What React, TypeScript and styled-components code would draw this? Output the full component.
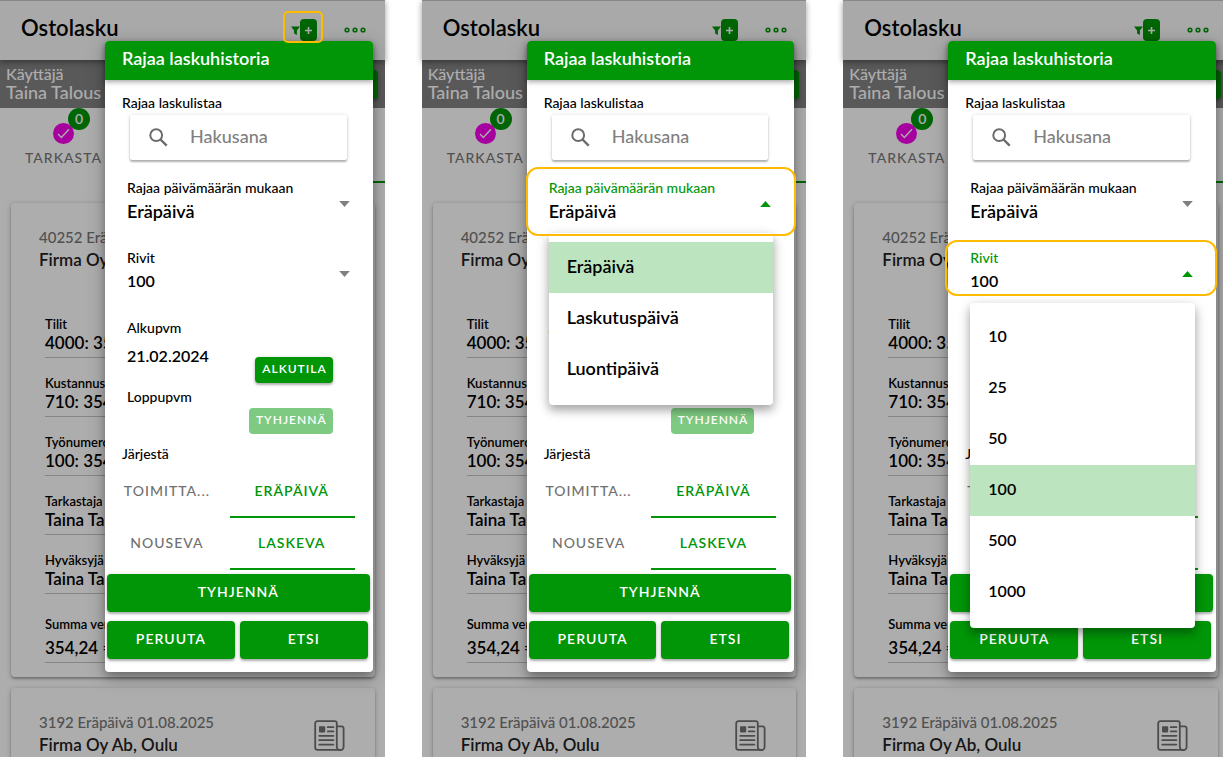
import React from "react";
import styled, { createGlobalStyle, css } from "styled-components";

const GlobalStyle = createGlobalStyle`
  *, *::before, *::after { box-sizing: border-box; }
  body {
    margin: 0;
    background: #fff;
    overflow-x: hidden;
    font-family: Lato, "Liberation Sans", sans-serif;
    font-weight: 600;
    color: #000;
  }
  button, input, select { font: inherit; color: inherit; margin: 0; padding: 0; border: 0; background: none; border-radius: 0; outline: none; }
  button { cursor: pointer; }
`;

const green = "#009608";
const amber = "#ffbb00";

const Board = styled.main`
  display: grid;
  grid-template-columns: repeat(3, minmax(0, 1fr));
  gap: 37px;
  min-height: 100vh;
  margin-right: -5px;
`;

const Phone = styled.section`
  position: relative;
  display: flex;
  flex-direction: column;
  background: #fff;
`;

const Scrim = styled.div`
  position: absolute;
  inset: 0;
  background: rgba(0, 0, 0, 0.32);
`;

/* ---------- page under the dialog ---------- */

const AppBar = styled.header`
  position: relative;
  display: flex;
  align-items: center;
  height: 60px;
  padding: 0 19px 4px 21px;
  border-top: 1px solid #c8c8c8;
  background: #fafafa;
  box-shadow: 0 2px 6px rgba(0, 0, 0, 0.4);
`;

const PageTitle = styled.h1`
  flex: 1;
  margin: 0;
  padding-bottom: 2px;
  font-size: 22px;
  font-weight: 600;
  line-height: 28px;
`;

const FilterButton = styled.button`
  display: flex;
  align-items: center;
  height: 22px;
  margin: 3px 27px 0 0;
`;

const PlusBox = styled.span`
  display: flex;
  align-items: center;
  justify-content: center;
  width: 17px;
  height: 22px;
  border-radius: 4px;
  background: ${green};
  color: #fff;
`;

const MoreButton = styled.button`
  display: flex;
  align-items: center;
  height: 22px;
  margin-top: 3px;
`;

const UserBar = styled.div`
  display: flex;
  align-items: center;
  justify-content: space-between;
  height: 48px;
  padding: 0 7px 2px 6px;
  background: #838383;
  color: #fff;
`;

const UserName = styled.p`
  margin: 0;
  font-size: 18px;
  font-weight: 500;
  line-height: 18px;
`;

const UserRole = styled(UserName)`
  font-size: 16px;
`;

const UserButton = styled.button`
  width: 60px;
  height: 29px;
  margin-top: 3px;
  border-radius: 4px;
  background: ${green};
  box-shadow: 0 2px 3px rgba(0, 0, 0, 0.3);
`;

const StageTabs = styled.nav`
  display: grid;
  grid-template-columns: 1fr 1fr;
  height: 75px;
`;

const StageTab = styled.button<{ $active?: boolean }>`
  display: flex;
  flex-direction: column;
  align-items: flex-start;
  padding: 15px 0 0 25px;
  border-bottom: 2px solid ${(p) => (p.$active ? green : "transparent")};
  color: #7a7a7a;
  font-size: 14px;
  font-weight: 500;
  line-height: 20px;
  letter-spacing: 1px;
`;

const StageMark = styled.span`
  position: relative;
  display: flex;
  align-items: center;
  justify-content: center;
  width: 21px;
  height: 21px;
  margin: 0 0 4px 28px;
  border-radius: 50%;
  background: #f500eb;
  color: #fff;
`;

const CountBadge = styled.span`
  position: absolute;
  left: 15px;
  top: -15px;
  width: 22px;
  height: 22px;
  border-radius: 50%;
  background: ${green};
  font-size: 14px;
  font-weight: 600;
  line-height: 21px;
  text-align: center;
  letter-spacing: 0;
`;

const Invoice = styled.article<{ $last?: boolean }>`
  position: relative;
  margin: ${(p) => (p.$last ? "11px 10px 0 11px" : "20px 10px 0 11px")};
  padding: 24px 30px 14px 28px;
  border-radius: ${(p) => (p.$last ? "4px 4px 0 0" : "4px")};
  box-shadow: 0 1px 5px rgba(0, 0, 0, 0.25), 0 2px 2px rgba(0, 0, 0, 0.2);
  flex: ${(p) => (p.$last ? "1 0 auto" : "none")};
`;

const InvoiceHead = styled.header`
  display: flex;
  justify-content: space-between;
  align-items: center;
`;

const InvoiceMeta = styled.p`
  margin: 0;
  color: #777;
  font-size: 15px;
  font-weight: 500;
  line-height: 20px;
`;

const InvoiceFirm = styled.h2`
  margin: 0;
  color: #222;
  font-size: 17px;
  font-weight: 600;
  line-height: 26px;
`;

const Details = styled.dl`
  margin: 43px 0 0 6px;
`;

const Detail = styled.div<{ $total?: boolean }>`
  margin-top: ${(p) => (p.$total ? 22 : 17)}px;
  padding-bottom: 4px;
  border-bottom: 1px solid #c4c4c4;
  line-height: 16px;

  dt { font-size: 13px; }
  dd { margin: ${(p) => (p.$total ? 6 : 1)}px 0 0; font-size: 17px; line-height: 20px; }
`;

/* ---------- filter dialog ---------- */

const Dialog = styled.form`
  position: absolute;
  top: 41px;
  left: 105px;
  right: 12px;
  padding-bottom: 13px;
  border-radius: 4px;
  background: #fff;
  box-shadow: 0 5px 8px rgba(0, 0, 0, 0.25), 0 4px 20px rgba(0, 0, 0, 0.22);
`;

const DialogTitle = styled.h2`
  margin: 0;
  padding: 0 17px 5px;
  border-radius: 4px 4px 0 0;
  background: ${green};
  box-shadow: 0 2px 5px rgba(0, 0, 0, 0.35);
  color: #fff;
  font-size: 18px;
  font-weight: 600;
  line-height: 34px;
`;

const Caption = styled.label`
  display: block;
  color: #000;
  font-size: 14px;
  font-weight: 500;
  line-height: 16px;
`;

const SearchCaption = styled(Caption)`
  margin: 15px 17px 4px;
`;

const SearchBox = styled.div`
  display: flex;
  align-items: center;
  gap: 22px;
  height: 45px;
  margin: 0 26px 0 25px;
  padding: 0 19px;
  border-radius: 2px;
  box-shadow: 0 0 4px rgba(0, 0, 0, 0.12), 0 2px 2px rgba(0, 0, 0, 0.28);

  input { min-width: 0; flex: 1; padding-bottom: 4px; font-size: 18px; font-weight: 500; }
  input::placeholder { color: #808080; opacity: 1; }
`;

const Field = styled.div<{ $first?: boolean }>`
  position: relative;
  display: flex;
  align-items: center;
  margin-top: ${(p) => (p.$first ? 20 : 26)}px;
  padding: 0 23px 0 22px;

  > svg { margin-top: 4px; }
`;

const FieldBody = styled.div<{ $open?: boolean; $numeric?: boolean }>`
  flex: 1;
  min-width: 0;

  ${Caption} { color: ${(p) => (p.$open ? green : "#000")}; }

  select {
    display: block;
    width: 100%;
    height: 24px;
    margin-top: 4px;
    padding-bottom: 2px;
    appearance: none;
    font-size: ${(p) => (p.$numeric ? 16 : 18)}px;
    line-height: 22px;
  }
`;

const DateField = styled.div<{ $short?: boolean }>`
  display: flex;
  justify-content: space-between;
  align-items: flex-end;
  min-height: ${(p) => (p.$short ? 45 : 63)}px;
  margin-top: ${(p) => (p.$short ? 6 : 26)}px;
  padding: 0 40px 0 22px;

  input { display: block; width: 100%; height: 24px; margin-top: ${(p) => (p.$short ? 4 : 8)}px; padding-bottom: 2px; font-size: 16px; }
`;

const DateValue = styled.div`
  flex: 1;
  min-width: 0;
  align-self: flex-start;
`;

const raised = css`
  border-radius: 4px;
  background: ${green};
  box-shadow: 0 1px 4px rgba(0, 0, 0, 0.2), 0 2px 2px rgba(0, 0, 0, 0.2);
  color: #fff;
  letter-spacing: 1px;
`;

const SmallButton = styled.button`
  ${raised}
  height: 26px;
  padding: 0 6px 2px 7px;
  font-size: 12px;
  font-weight: 600;
  line-height: 24px;

  &:disabled { opacity: 0.5; box-shadow: none; }
`;

const SortCaption = styled.p`
  margin: 12px 17px 4px;
  font-size: 14px;
  font-weight: 500;
  line-height: 16px;
`;

const SortTabs = styled.div`
  display: grid;
  grid-template-columns: 1fr 1fr;
  margin-right: 18px;
`;

const SortTab = styled.button<{ $active?: boolean }>`
  height: 52px;
  padding: 0 17px 2px 16px;
  border-bottom: 2px solid ${(p) => (p.$active ? green : "transparent")};
  color: ${(p) => (p.$active ? green : "#707070")};
  font-size: 14px;
  font-weight: ${(p) => (p.$active ? 600 : 500)};
  letter-spacing: 1px;
  overflow: hidden;
  white-space: nowrap;
`;

const Actions = styled.div`
  display: grid;
  grid-template-columns: 1fr 1fr;
  gap: 9px 5px;
  margin: 4px 5px 0 2px;
`;

const ActionButton = styled.button<{ $wide?: boolean }>`
  ${raised}
  height: 38px;
  padding-bottom: 4px;
  font-size: 14px;
  font-weight: 600;
  grid-column: ${(p) => (p.$wide ? "1 / -1" : "auto")};
  margin-right: ${(p) => (p.$wide ? -2 : 0)}px;
`;

const Menu = styled.ul`
  position: absolute;
  z-index: 1;
  top: 53px;
  left: 22px;
  right: 21px;
  margin: 0;
  padding: 9px 0 10px;
  list-style: none;
  border-radius: 4px;
  background: #fff;
  box-shadow: 0 5px 8px rgba(0, 0, 0, 0.22), 0 4px 14px rgba(0, 0, 0, 0.2);
`;

const Option = styled.li<{ $selected?: boolean; $numeric?: boolean }>`
  padding: 0 18px 3px;
  background: ${(p) => (p.$selected ? "#bce5bf" : "transparent")};
  font-size: ${(p) => (p.$numeric ? 16 : 18)}px;
  line-height: 48px;
`;

const Highlight = styled.span<{ $inset: string }>`
  position: absolute;
  z-index: 2;
  inset: ${(p) => p.$inset};
  border: 2px solid ${amber};
  border-radius: 12px;
  pointer-events: none;
`;

const FilterMark = styled.span`
  position: absolute;
  top: 11px;
  right: 62px;
  width: 40px;
  height: 32px;
  border: 2px solid ${amber};
  border-radius: 5px;
  pointer-events: none;
`;

/* ---------- icons ---------- */

const FunnelIcon = () => (
  <svg width="9" height="9" viewBox="0 0 9 9" aria-hidden="true">
    <path d="M0 0.5h9L5.9 4.6V9L3.1 7.4V4.6z" fill={green} />
  </svg>
);

const PlusIcon = () => (
  <svg width="7" height="7" viewBox="0 0 7 7" aria-hidden="true">
    <path d="M3.5 0v7M0 3.5h7" stroke="currentColor" strokeWidth="1.6" />
  </svg>
);

const DotsIcon = () => (
  <svg width="22" height="6" viewBox="0 0 22 6" fill="none" stroke={green} strokeWidth="1.6" aria-hidden="true">
    <circle cx="3" cy="3" r="1.8" />
    <circle cx="11" cy="3" r="1.8" />
    <circle cx="19" cy="3" r="1.8" />
  </svg>
);

const CheckIcon = () => (
  <svg width="13" height="11" viewBox="0 0 13 11" fill="none" aria-hidden="true">
    <path d="M1 6l3.4 3.4L12 1.2" stroke="currentColor" strokeWidth="1.4" />
  </svg>
);

const SearchIcon = () => (
  <svg width="19" height="19" viewBox="0 0 19 19" fill="none" stroke="#6b6b6b" strokeWidth="2" aria-hidden="true">
    <circle cx="7.2" cy="7.2" r="5.9" />
    <path d="M11.5 11.5L17.7 17.7" strokeWidth="2.4" />
  </svg>
);

const Caret = ({ open }: { open?: boolean }) => (
  <svg width="11" height="6" viewBox="0 0 11 6" aria-hidden="true">
    <path d={open ? "M0.2 6L5.5 0L10.8 6z" : "M0.2 0h10.6L5.5 6z"} fill={open ? green : "#808080"} />
  </svg>
);

const NewsIcon = () => (
  <svg width="31" height="31" viewBox="0 0 31 31" fill="none" stroke="#707070" strokeWidth="1.8" aria-hidden="true">
    <path d="M26.6 29.8H3.6A2.4 2.4 0 0 1 1.2 27.4V3.2A2 2 0 0 1 3.2 1.2H20.8A2 2 0 0 1 22.8 3.2V27" />
    <path d="M22.8 6.4h4.6a2.2 2.2 0 0 1 2.2 2.2v18a3.2 3.2 0 0 1-6.8 0.4" />
    <rect x="5" y="6.2" width="6.2" height="6.2" rx="0.8" fill="#707070" stroke="none" />
    <path d="M13.8 7.2h5.6M13.8 11.4h5.6M5.2 15.8h14.2M5.2 20.2h14.2M5.2 24.6h14.2" strokeLinecap="round" />
  </svg>
);

/* ---------- screens ---------- */

const details = [
  ["Tilit", "4000: 354"],
  ["Kustannuspaikka", "710: 354"],
  ["Työnumero", "100: 354"],
  ["Tarkastaja", "Taina Talous"],
  ["Hyväksyjä", "Taina Talous"],
  ["Summa verollinen", "354,24 ="],
];

type OpenField = "date" | "rows";

type SelectFieldProps = {
  id: string;
  label: string;
  value: string;
  options: string[];
  open?: boolean;
  first?: boolean;
  numeric?: boolean;
  mark: string;
};

const SelectField = ({ id, label, value, options, open, first, numeric, mark }: SelectFieldProps) => (
  <Field $first={first}>
    <FieldBody $open={open} $numeric={numeric}>
      <Caption htmlFor={id}>{label}</Caption>
      <select id={id} defaultValue={value}>
        {options.map((o) => (
          <option key={o}>{o}</option>
        ))}
      </select>
    </FieldBody>
    <Caret open={open} />
    {open && (
      <>
        <Menu role="listbox" aria-label={label}>
          {options.map((o) => (
            <Option key={o} role="option" aria-selected={o === value} $selected={o === value} $numeric={numeric}>
              {o}
            </Option>
          ))}
        </Menu>
        <Highlight $inset={mark} />
      </>
    )}
  </Field>
);

const FilterDialog = ({ id, open }: { id: string; open?: OpenField }) => (
  <Dialog onSubmit={(e) => e.preventDefault()}>
    <DialogTitle>Rajaa laskuhistoria</DialogTitle>
    <SearchCaption htmlFor={`${id}-search`}>Rajaa laskulistaa</SearchCaption>
    <SearchBox>
      <SearchIcon />
      <input id={`${id}-search`} type="text" placeholder="Hakusana" />
    </SearchBox>
    <SelectField
      id={`${id}-date`}
      label="Rajaa päivämäärän mukaan"
      value="Eräpäivä"
      options={["Eräpäivä", "Laskutuspäivä", "Luontipäivä"]}
      open={open === "date"}
      first
      mark="-13px -2px -12px -1px"
    />
    <SelectField
      id={`${id}-rows`}
      label="Rivit"
      value="100"
      options={["10", "25", "50", "100", "500", "1000"]}
      open={open === "rows"}
      numeric
      mark="-10px -1px -2px -3px"
    />
    <DateField>
      <DateValue>
        <Caption htmlFor={`${id}-from`}>Alkupvm</Caption>
        <input id={`${id}-from`} type="text" defaultValue="21.02.2024" />
      </DateValue>
      <SmallButton type="button">ALKUTILA</SmallButton>
    </DateField>
    <DateField $short>
      <DateValue>
        <Caption htmlFor={`${id}-to`}>Loppupvm</Caption>
        <input id={`${id}-to`} type="text" />
      </DateValue>
      <SmallButton type="button" disabled>
        TYHJENNÄ
      </SmallButton>
    </DateField>
    <SortCaption>Järjestä</SortCaption>
    <SortTabs>
      <SortTab type="button">TOIMITTA...</SortTab>
      <SortTab type="button" $active>ERÄPÄIVÄ</SortTab>
      <SortTab type="button">NOUSEVA</SortTab>
      <SortTab type="button" $active>LASKEVA</SortTab>
    </SortTabs>
    <Actions>
      <ActionButton type="button" $wide>TYHJENNÄ</ActionButton>
      <ActionButton type="button">PERUUTA</ActionButton>
      <ActionButton type="submit">ETSI</ActionButton>
    </Actions>
  </Dialog>
);

const Screen = ({ id, open, marked }: { id: string; open?: OpenField; marked?: boolean }) => (
  <Phone>
    <AppBar>
      <PageTitle>Ostolasku</PageTitle>
      <FilterButton type="button" aria-label="Rajaa">
        <FunnelIcon />
        <PlusBox><PlusIcon /></PlusBox>
      </FilterButton>
      <MoreButton type="button" aria-label="Lisää"><DotsIcon /></MoreButton>
    </AppBar>
    <UserBar>
      <div>
        <UserRole>Käyttäjä</UserRole>
        <UserName>Taina Talous</UserName>
      </div>
      <UserButton type="button" aria-label="Vaihda" />
    </UserBar>
    <StageTabs>
      <StageTab type="button">
        <StageMark><CheckIcon /><CountBadge>0</CountBadge></StageMark>
        TARKASTA
      </StageTab>
      <StageTab type="button" $active aria-label="Historia" />
    </StageTabs>
    <Invoice>
      <InvoiceHead>
        <div>
          <InvoiceMeta>40252 Eräpäivä</InvoiceMeta>
          <InvoiceFirm>Firma Oy Ab</InvoiceFirm>
        </div>
      </InvoiceHead>
      <Details>
        {details.map(([name, value], i) => (
          <Detail key={name} $total={i === details.length - 1}>
            <dt>{name}</dt>
            <dd>{value}</dd>
          </Detail>
        ))}
      </Details>
    </Invoice>
    <Invoice $last>
      <InvoiceHead>
        <div>
          <InvoiceMeta>3192 Eräpäivä 01.08.2025</InvoiceMeta>
          <InvoiceFirm>Firma Oy Ab, Oulu</InvoiceFirm>
        </div>
        <NewsIcon />
      </InvoiceHead>
    </Invoice>
    <Scrim />
    <FilterDialog id={id} open={open} />
    {marked && <FilterMark />}
  </Phone>
);

export default function App() {
  return (
    <>
      <GlobalStyle />
      <Board>
        <Screen id="plain" marked />
        <Screen id="by-date" open="date" />
        <Screen id="by-rows" open="rows" />
      </Board>
    </>
  );
}
